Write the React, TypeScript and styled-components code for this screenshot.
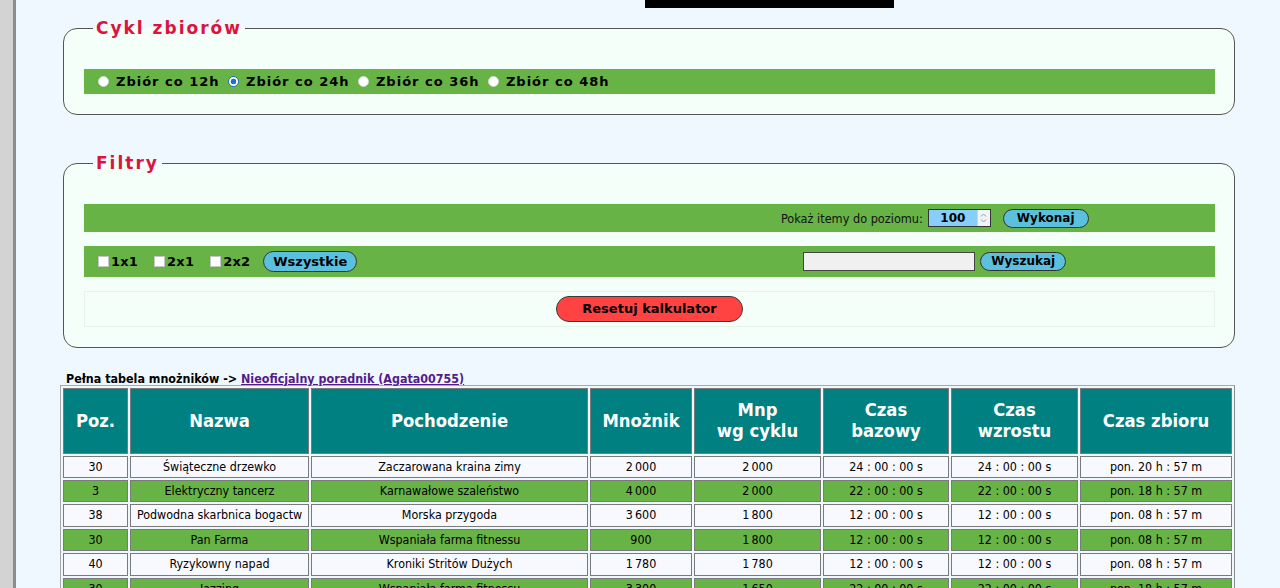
import React, { useState } from 'react';
import styled, { createGlobalStyle } from 'styled-components';

const GlobalStyle = createGlobalStyle`
  html, body {
    margin: 0;
    padding: 0;
    background: #f0f8ff;
    overflow: hidden;
    font-family: "DejaVu Sans Condensed", "DejaVu Sans", sans-serif;
  }
`;

type Row = {
  poz: string;
  nazwa: string;
  poch: string;
  mn: string;
  mnp: string;
  baz: string;
  wzr: string;
  zb: string;
};

const rows: Row[] = [
  { poz: '30', nazwa: 'Świąteczne drzewko', poch: 'Zaczarowana kraina zimy', mn: '2\u2009000', mnp: '2\u2009000', baz: '24 : 00 : 00 s', wzr: '24 : 00 : 00 s', zb: 'pon. 20 h : 57 m' },
  { poz: '3', nazwa: 'Elektryczny tancerz', poch: 'Karnawałowe szaleństwo', mn: '4\u2009000', mnp: '2\u2009000', baz: '22 : 00 : 00 s', wzr: '22 : 00 : 00 s', zb: 'pon. 18 h : 57 m' },
  { poz: '38', nazwa: 'Podwodna skarbnica bogactw', poch: 'Morska przygoda', mn: '3\u2009600', mnp: '1\u2009800', baz: '12 : 00 : 00 s', wzr: '12 : 00 : 00 s', zb: 'pon. 08 h : 57 m' },
  { poz: '30', nazwa: 'Pan Farma', poch: 'Wspaniała farma fitnessu', mn: '900', mnp: '1\u2009800', baz: '12 : 00 : 00 s', wzr: '12 : 00 : 00 s', zb: 'pon. 08 h : 57 m' },
  { poz: '40', nazwa: 'Ryzykowny napad', poch: 'Kroniki Stritów Dużych', mn: '1\u2009780', mnp: '1\u2009780', baz: '12 : 00 : 00 s', wzr: '12 : 00 : 00 s', zb: 'pon. 08 h : 57 m' },
  { poz: '30', nazwa: 'Jazzing', poch: 'Wspaniała farma fitnessu', mn: '3\u2009300', mnp: '1\u2009650', baz: '22 : 00 : 00 s', wzr: '22 : 00 : 00 s', zb: 'pon. 18 h : 57 m' },
  { poz: '30', nazwa: 'Kolorowy ogród', poch: 'Wiosenne przebudzenie', mn: '3\u2009000', mnp: '1\u2009500', baz: '22 : 00 : 00 s', wzr: '22 : 00 : 00 s', zb: 'pon. 18 h : 57 m' },
];

// szerokości kolumn tabeli
const columns = [
  { label: 'Poz.', width: 65 },
  { label: 'Nazwa', width: 179 },
  { label: 'Pochodzenie', width: 277 },
  { label: 'Mnożnik', width: 102 },
  { label: 'Mnp\nwg cyklu', width: 127 },
  { label: 'Czas\nbazowy', width: 126 },
  { label: 'Czas\nwzrostu', width: 127 },
  { label: 'Czas zbioru', width: 152 },
];

const cycles = ['Zbiór co 12h', 'Zbiór co 24h', 'Zbiór co 36h', 'Zbiór co 48h'];
const sizes = ['1x1', '2x1', '2x2'];

const App = () => {
  const [cycle, setCycle] = useState(1);
  const [level, setLevel] = useState('100');
  const [search, setSearch] = useState('');

  return (
    <Layout>
      <GlobalStyle />
      <Sidebar />
      <Main>
        <TopBanner />

        <Fieldset>
          <Legend>Cykl zbiorów</Legend>
          <RadioBar>
            {cycles.map((c, i) => (
              <RadioOption key={c}>
                <Radio
                  type="radio"
                  name="cykl"
                  checked={cycle === i}
                  onChange={() => setCycle(i)}
                />
                {c}
              </RadioOption>
            ))}
          </RadioBar>
        </Fieldset>

        <Fieldset $second>
          <Legend>Filtry</Legend>
          <FilterBar $height={28}>
            <div />
            <RightCell>
              <PlainText>Pokaż itemy do poziomu:</PlainText>
              <NumberBox>
                <NumberInput
                  value={level}
                  onChange={(e: React.ChangeEvent<HTMLInputElement>) => setLevel(e.target.value)}
                />
                <Spinner>
                  <svg width="7" height="12" viewBox="0 0 7 12">
                    <path d="M1 4.5 L3.5 2 L6 4.5" fill="none" stroke="#9a9a9a" strokeWidth="1" />
                    <path d="M1 7.5 L3.5 10 L6 7.5" fill="none" stroke="#9a9a9a" strokeWidth="1" />
                  </svg>
                </Spinner>
              </NumberBox>
              <BlueButton $gap={12} $pad={13}>Wykonaj</BlueButton>
            </RightCell>
          </FilterBar>

          <FilterBar $height={31}>
            <LeftCell>
              {sizes.map((s) => (
                <CheckOption key={s}>
                  <Check type="checkbox" />
                  {s}
                </CheckOption>
              ))}
              <AllButton>Wszystkie</AllButton>
            </LeftCell>
            <RightCell>
              <SearchInput
                value={search}
                onChange={(e: React.ChangeEvent<HTMLInputElement>) => setSearch(e.target.value)}
              />
              <BlueButton $gap={5} $pad={10}>Wyszukaj</BlueButton>
            </RightCell>
          </FilterBar>

          <ResetBox>
            <ResetButton>Resetuj kalkulator</ResetButton>
          </ResetBox>
        </Fieldset>

        <InfoLine>
          Pełna tabela mnożników -&gt; <GuideLink href="#">Nieoficjalny poradnik (Agata00755)</GuideLink>
        </InfoLine>

        <Table>
          <thead>
            <tr>
              {columns.map((c) => (
                <HeadCell key={c.label} style={{ width: c.width }}>
                  {c.label}
                </HeadCell>
              ))}
            </tr>
          </thead>
          <tbody>
            {rows.map((r, i) => (
              <DataRow key={i} $green={i % 2 === 1}>
                <td>{r.poz}</td>
                <td>{r.nazwa}</td>
                <td>{r.poch}</td>
                <td>{r.mn}</td>
                <td>{r.mnp}</td>
                <td>{r.baz}</td>
                <td>{r.wzr}</td>
                <td>{r.zb}</td>
              </DataRow>
            ))}
          </tbody>
        </Table>
      </Main>
    </Layout>
  );
};

export default App;

const GREEN = '#67b346';

const Layout = styled.div`
  display: flex;
  min-height: 100vh;
`;

const Sidebar = styled.div`
  width: 13px;
  flex-shrink: 0;
  background: #d3d3d3;
  border-right: 3px solid #8c8c8c;
`;

const Main = styled.div`
  flex: 1;
  padding: 0 48px 0 47px;
  background: #f0f8ff;
`;

//górny czarny baner
const TopBanner = styled.div`
  width: 249px;
  height: 8px;
  margin-left: 582px;
  background: #000;
`;

const Fieldset = styled.fieldset<{ $second?: boolean }>`
  margin: ${(p) => (p.$second ? '38px' : '10px')} 0 0;
  padding: 31px 19px 20px 20px;
  border: 1px solid #555;
  border-radius: 14px;
  background: #f5fffa;
`;

const Legend = styled.legend`
  margin-left: 9px;
  padding: 0 3px;
  font-family: "DejaVu Sans", sans-serif;
  font-size: 17px;
  font-weight: bold;
  letter-spacing: 2px;
  color: #dc143c;
`;

const RadioBar = styled.div`
  display: flex;
  align-items: center;
  height: 25px;
  padding-left: 14px;
  background: ${GREEN};
`;

const RadioOption = styled.label`
  display: flex;
  align-items: center;
  gap: 7px;
  margin-right: 8.4px;
  font-family: "DejaVu Sans", sans-serif;
  font-size: 13px;
  font-weight: bold;
  letter-spacing: 1px;
  color: #000;
`;

const Radio = styled.input`
  appearance: none;
  width: 11px;
  height: 11px;
  margin: 0;
  border-radius: 50%;
  border: 1px solid #d6d6d6;
  background: #fff;
  &:checked {
    border-color: #1a6fd8;
    background: radial-gradient(circle, #1a6fd8 0 2.6px, #fff 3.1px);
  }
`;

const FilterBar = styled.div<{ $height: number }>`
  display: grid;
  grid-template-columns: 1fr 1fr;
  align-items: center;
  height: ${(p) => p.$height}px;
  margin-bottom: 14px;
  background: ${GREEN};
`;

const LeftCell = styled.div`
  display: flex;
  align-items: center;
  padding-left: 14px;
`;

const RightCell = styled.div`
  display: flex;
  align-items: center;
  justify-content: center;
  padding-left: 5px;
`;

const PlainText = styled.span`
  font-size: 12.6px;
  color: #111;
`;

const NumberBox = styled.div`
  display: flex;
  width: 61px;
  height: 16px;
  margin-left: 5px;
  border: 1px solid #333;
  background: #87cefa;
`;

const NumberInput = styled.input`
  width: 48px;
  padding: 0;
  border: none;
  outline: none;
  background: transparent;
  text-align: center;
  font-family: "DejaVu Sans", sans-serif;
  font-size: 12px;
  font-weight: bold;
  color: #000;
`;

const Spinner = styled.span`
  display: flex;
  align-items: center;
  justify-content: center;
  width: 12px;
  margin-left: auto;
  background: #eef4f8;
  border-left: 1px solid #c9d6e0;
`;

const BlueButton = styled.button<{ $gap: number; $pad: number }>`
  margin-left: ${(p) => p.$gap}px;
  padding: 1px ${(p) => p.$pad}px;
  border: 1px solid #333;
  border-radius: 12px;
  background: #5bc0de;
  font-family: "DejaVu Sans", sans-serif;
  font-size: 12px;
  font-weight: bold;
  line-height: 15px;
  color: #000;
  cursor: pointer;
`;

const CheckOption = styled.label`
  display: flex;
  align-items: center;
  gap: 2px;
  margin-right: 16px;
  font-family: "DejaVu Sans", sans-serif;
  font-size: 13px;
  font-weight: bold;
  letter-spacing: 0.2px;
  color: #000;
`;

const Check = styled.input`
  appearance: none;
  width: 11px;
  height: 11px;
  margin: 0;
  border: 1px solid #c4c4c4;
  background: #fff;
`;

const AllButton = styled.button`
  margin-left: -3px;
  padding: 2px 9px;
  border: 1px solid #333;
  border-radius: 12px;
  background: #5bc0de;
  font-family: "DejaVu Sans", sans-serif;
  font-size: 13px;
  font-weight: bold;
  line-height: 15px;
  color: #000;
  cursor: pointer;
`;

const SearchInput = styled.input`
  width: 168px;
  height: 17px;
  padding: 0 1px;
  border: 1px solid #444;
  background: #f0f0f0;
  outline: none;
`;

//resetuj - pudełko
const ResetBox = styled.div`
  display: flex;
  align-items: center;
  justify-content: center;
  height: 34px;
  border: 1px solid #e6f4ec;
  background: #f5fffa;
`;

const ResetButton = styled.button`
  padding: 4px 25px 5px;
  border: 1px solid #3a3a3a;
  border-radius: 14px;
  background: #ff4242;
  font-family: "DejaVu Sans", sans-serif;
  font-size: 13px;
  font-weight: bold;
  line-height: 15px;
  color: #000;
  cursor: pointer;
`;

const InfoLine = styled.div`
  margin: 25px 0 0 3px;
  font-size: 12.4px;
  font-weight: bold;
  line-height: 12px;
  color: #000;
`;

const GuideLink = styled.a`
  color: #551a8b;
  text-decoration: underline;
`;

const Table = styled.table`
  width: 1175px;
  margin-left: -3px;
  table-layout: fixed;
  border-collapse: separate;
  border-spacing: 2px;
  border: 1px solid #8a8a8a;
  border-top-color: #a8a8a8;
  border-left-color: #a8a8a8;

  td {
    padding: 2px;
    border: 1px solid #7a7a7a;
    text-align: center;
    font-size: 12.4px;
    line-height: 16.4px;
    color: #000;
    white-space: nowrap;
    overflow: hidden;
  }
`;

const HeadCell = styled.th`
  box-sizing: border-box;
  padding: 10px 4px 11px;
  border: 1px solid #7a7a7a;
  background: #008080;
  color: #fff;
  font-size: 18.3px;
  font-weight: bold;
  line-height: 21.3px;
  white-space: pre-line;
`;

const DataRow = styled.tr<{ $green: boolean }>`
  td {
    background: ${(p) => (p.$green ? GREEN : '#f8f8ff')};
  }
`;
